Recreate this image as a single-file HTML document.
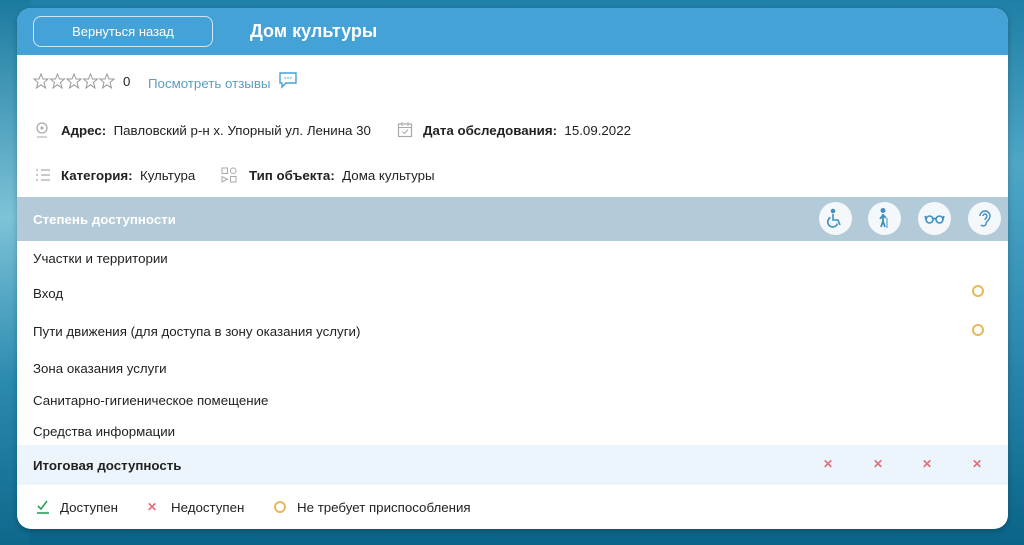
<!DOCTYPE html>
<html><head><meta charset="utf-8"><style>
*{margin:0;padding:0;box-sizing:border-box}
body{width:1024px;height:545px;overflow:hidden;font-family:"Liberation Sans",sans-serif;background:linear-gradient(180deg,#1f7fa6 0%,#4ea6c6 30%,#2f8cb3 60%,#0a6489 100%);position:relative}
.lft{position:absolute;left:0;top:0;width:30px;height:545px;background:linear-gradient(180deg,#1b7aa0,#7cc3d8 40%,#2b8ab0 70%,#0d688c)}
.card{position:absolute;left:17px;top:8px;width:991px;height:521px;background:#fff;border-radius:14px;overflow:hidden;box-shadow:0 2px 6px rgba(0,0,0,.25)}
.hdr{position:absolute;left:0;top:0;width:100%;height:47px;background:#45a2d6}
.btn{position:absolute;left:16px;top:8px;width:180px;height:31px;border:1px solid #cfe6f4;border-radius:8px;color:#fff;font-size:13px;text-align:center;line-height:29px}
.ttl{position:absolute;left:233px;top:13px;color:#fff;font-weight:bold;font-size:18px}
.t{position:absolute;font-size:13.3px;color:#222;white-space:nowrap}
.b{font-weight:bold}
.bar{position:absolute;left:0;top:189px;width:100%;height:44px;background:#b3cbd8}
.ic{position:absolute;top:194px;width:33px;height:33px;border-radius:50%;background:#f4f8fb}
.tot{position:absolute;left:0;top:437px;width:100%;height:40px;background:#ecf5fb}
.x{position:absolute;color:#e0707a;font-size:12px;font-weight:bold}
.o{position:absolute;width:12px;height:12px;border:2px solid #e8b95a;border-radius:50%}
</style></head><body>
<div class="lft"></div>
<div class="card">
<div class="hdr"><div class="btn">Вернуться назад</div><div class="ttl">Дом культуры</div></div>
<svg style="position:absolute;left:16px;top:65px" width="100" height="16" viewBox="0 0 100 16"><g fill="none" stroke="#999" stroke-width="1">
<polygon id="s" points="8,1 10,6 15,6 11,9.5 12.5,15 8,11.8 3.5,15 5,9.5 1,6 6,6"/>
<use href="#s" x="16.5"/><use href="#s" x="33"/><use href="#s" x="49.5"/><use href="#s" x="66"/></g></svg>
<div class="t" style="left:106px;top:66px">0</div>
<div class="t" style="left:131px;top:68px;color:#5a9fc0">Посмотреть отзывы</div>
<svg style="position:absolute;left:261px;top:63px" width="20" height="18"><path d="M2 2h16v10H8l-4 4v-4H2z" fill="none" stroke="#45a2d6" stroke-width="1.4"/><circle cx="7" cy="7" r=".8" fill="#45a2d6"/><circle cx="10" cy="7" r=".8" fill="#45a2d6"/><circle cx="13" cy="7" r=".8" fill="#45a2d6"/></svg>
<svg style="position:absolute;left:18px;top:113px" width="14" height="18"><circle cx="7" cy="7" r="5" fill="none" stroke="#aaa" stroke-width="1.3"/><circle cx="7" cy="7" r="1.5" fill="#aaa"/><path d="M2 16h10" stroke="#aaa"/></svg>
<div class="t" style="left:44px;top:115px"><span class="b">Адрес:</span>&nbsp; Павловский р-н х. Упорный ул. Ленина 30</div>
<svg style="position:absolute;left:380px;top:113px" width="16" height="17"><rect x="1.5" y="3" width="13" height="12.5" fill="none" stroke="#aaa" stroke-width="1.2"/><path d="M1.5 6.5h13M5 1v4M11 1v4M5.5 10.5l2 2 3.5-4" fill="none" stroke="#aaa"/></svg>
<div class="t" style="left:406px;top:115px"><span class="b">Дата обследования:</span>&nbsp; 15.09.2022</div>
<svg style="position:absolute;left:18px;top:160px" width="16" height="14"><path d="M1 2h2M6 2h9M1 7h2M6 7h9M1 12h2M6 12h9" stroke="#aaa" stroke-width="1.2"/></svg>
<div class="t" style="left:44px;top:160px"><span class="b">Категория:</span>&nbsp; Культура</div>
<svg style="position:absolute;left:204px;top:159px" width="16" height="16"><rect x="1" y="1" width="5.5" height="5.5" fill="none" stroke="#aaa"/><rect x="9.5" y="1" width="5.5" height="5.5" rx="2.5" fill="none" stroke="#aaa"/><path d="M1 9.5v5.5l5.5-2.75z" fill="none" stroke="#aaa"/><rect x="9.5" y="9.5" width="5.5" height="5.5" fill="none" stroke="#aaa"/></svg>
<div class="t" style="left:232px;top:160px"><span class="b">Тип объекта:</span>&nbsp; Дома культуры</div>
<div class="bar"></div>
<div class="t b" style="left:16px;top:204px;color:#fff">Степень доступности</div>
<div class="ic" style="left:802px"><svg width="33" height="33"><g fill="none" stroke="#3d8fc0" stroke-width="1.6"><circle cx="14" cy="9" r="1.5" fill="#3d8fc0"/><path d="M14 12v6h5l2 5"/><path d="M11.5 15.5a5 5 0 1 0 7 6"/></g></svg></div>
<div class="ic" style="left:851px"><svg width="33" height="33"><g fill="none" stroke="#3d8fc0" stroke-width="1.8"><circle cx="15" cy="8.5" r="1.6" fill="#3d8fc0"/><path d="M15 12v7l-2 6M15 19l2 6M15 13l-3 4M15 13l3 3"/><path d="M19 16v10" stroke-width="1"/></g></svg></div>
<div class="ic" style="left:901px"><svg width="33" height="33"><g fill="none" stroke="#3d8fc0" stroke-width="1.6"><circle cx="11.5" cy="17.5" r="3.5"/><circle cx="21.5" cy="17.5" r="3.5"/><path d="M15 17q1.5-1 3 0M8 17l-1-3M25 17l1-3"/></g></svg></div>
<div class="ic" style="left:951px"><svg width="33" height="33"><g fill="none" stroke="#3d8fc0" stroke-width="1.4"><path d="M12 14a5 5 0 0 1 10 0c0 4-4 5-4 8a3 3 0 0 1-5 1"/><path d="M15 14a2 2 0 0 1 4 0c0 2-2 2-2 4"/></g></svg></div>
<div class="t" style="left:16px;top:243px">Участки и территории</div>
<div class="t" style="left:16px;top:278px">Вход</div>
<div class="o" style="left:955px;top:277px"></div>
<div class="t" style="left:16px;top:316px">Пути движения (для доступа в зону оказания услуги)</div>
<div class="o" style="left:955px;top:316px"></div>
<div class="t" style="left:16px;top:353px">Зона оказания услуги</div>
<div class="t" style="left:16px;top:385px">Санитарно-гигиеническое помещение</div>
<div class="t" style="left:16px;top:416px">Средства информации</div>
<div class="tot"></div>
<div class="t b" style="left:16px;top:450px">Итоговая доступность</div>
<div class="x" style="left:806px;top:449px">✕</div>
<div class="x" style="left:856px;top:449px">✕</div>
<div class="x" style="left:905px;top:449px">✕</div>
<div class="x" style="left:955px;top:449px">✕</div>
<svg style="position:absolute;left:19px;top:492px" width="14" height="14"><path d="M2 6l3 3 6-8" fill="none" stroke="#2aa05a" stroke-width="1.6"/><path d="M1 13h12" stroke="#2aa05a" stroke-width="1.6"/></svg>
<div class="t" style="left:43px;top:492px">Доступен</div>
<div class="x" style="left:130px;top:492px">✕</div>
<div class="t" style="left:154px;top:492px">Недоступен</div>
<div class="o" style="left:257px;top:493px"></div>
<div class="t" style="left:280px;top:492px">Не требует приспособления</div>
</div>
</body></html>
